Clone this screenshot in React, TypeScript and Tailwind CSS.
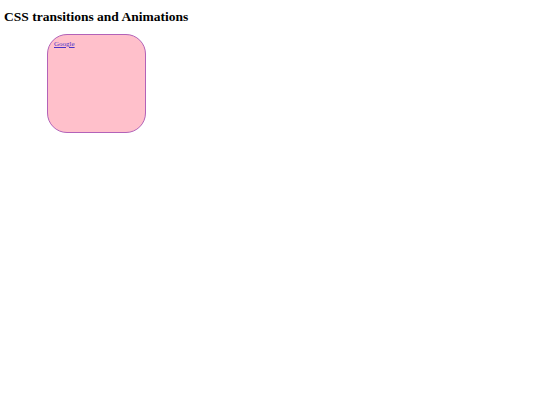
export default function App() {
  return (
    <div className="min-h-[405px] bg-white font-['Liberation_Serif',serif] text-black">
      <h1 className="pl-[4px] pt-[9px] text-[13.5px] leading-[16px] font-bold">
        CSS transitions and Animations
      </h1>
      <div className="ml-[47px] mt-[9px] h-[99px] w-[99px] rounded-[20px] border border-[#b262b8] bg-[#ffc0cb] px-[6px] py-[5px]">
        <a href="#" className="block text-[7px] leading-[9px] text-[#4a32c8] underline">
          Google
        </a>
      </div>
    </div>
  );
}
